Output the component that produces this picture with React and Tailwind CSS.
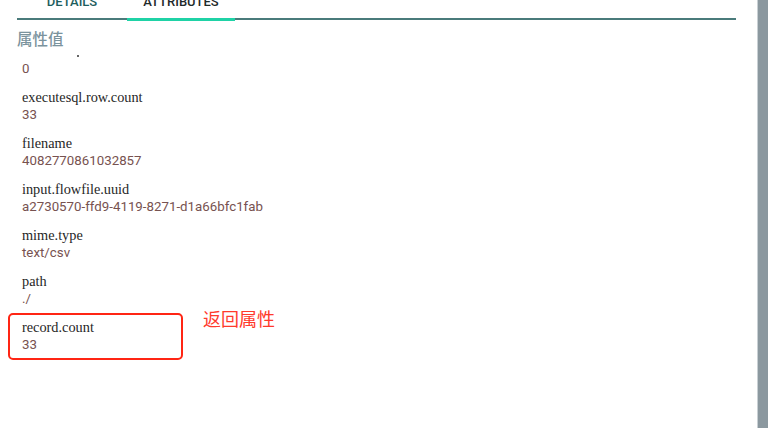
const attributes = [
  { name: 'executesql.row.count', value: '33' },
  { name: 'filename', value: '4082770861032857' },
  { name: 'input.flowfile.uuid', value: 'a2730570-ffd9-4119-8271-d1a66bfc1fab' },
  { name: 'mime.type', value: 'text/csv' },
  { name: 'path', value: './' },
  { name: 'record.count', value: '33' },
];

const Row = ({ name, value }) => (
  <div className="flex flex-col pt-[12px] pl-[5px]">
    <div className="h-[17px] leading-[17px] text-[14.3px] text-[#262626] font-['Liberation_Serif',serif]">
      {name}
    </div>
    <div className="h-[17px] leading-[17px] text-[13.3px] text-[#775250] font-['Roboto',sans-serif]">
      {value}
    </div>
  </div>
);

const App = () => {
  return (
    <div className="relative w-[768px] h-[428px] overflow-hidden bg-white">
      <div className="flex flex-col pl-[17px] pr-[32px]">

        {/* tabs, scrolled partly out of view */}
        <div className="flex h-[20px] border-b-2 border-[#4a7b7b] font-['Roboto',sans-serif] text-[13px] font-medium">
          <div className="w-[110px] h-full flex justify-center">
            <span className="leading-[14px] mt-[-5px] text-[#1d5e5e]">DETAILS</span>
          </div>
          <div className="relative w-[108px] h-full flex justify-center">
            <span className="leading-[14px] mt-[-5px] text-[#1f2a2a]">ATTRIBUTES</span>
            <div className="absolute left-0 right-0 bottom-[-3px] h-[3px] bg-[#1fd2a6]" />
          </div>
        </div>

        <h2 className="mt-[8px] h-[20px] leading-[20px] text-[15.5px] font-medium text-[#7b939d] font-['Noto_Sans_CJK_SC',sans-serif]">
          属性值
        </h2>

        <div className="relative pt-[12px] pl-[5px]">
          <div className="absolute left-[60px] top-[7px] w-[2px] h-[2px] rounded-full bg-[#333]" />
          <div className="h-[17px] leading-[17px] text-[13.3px] text-[#775250] font-['Roboto',sans-serif]">0</div>
        </div>

        {attributes.map((a) => (
          <Row key={a.name} name={a.name} value={a.value} />
        ))}
      </div>

      {/* annotation */}
      <div className="absolute left-[8px] top-[313px] w-[175px] h-[47px] border-[2.5px] border-[#ff2514] rounded-[5px]" />
      <div className="absolute left-[203px] top-[307px] text-[18px] leading-[22px] text-[#ff3a2c] font-['Noto_Sans_CJK_SC',sans-serif]">
        返回属性
      </div>

      {/* scrollbar */}
      <div className="absolute right-0 top-0 h-full w-[11px] bg-[#8b989f] border-l border-[#c9d0d4]" />
    </div>
  );
};

export default App;
